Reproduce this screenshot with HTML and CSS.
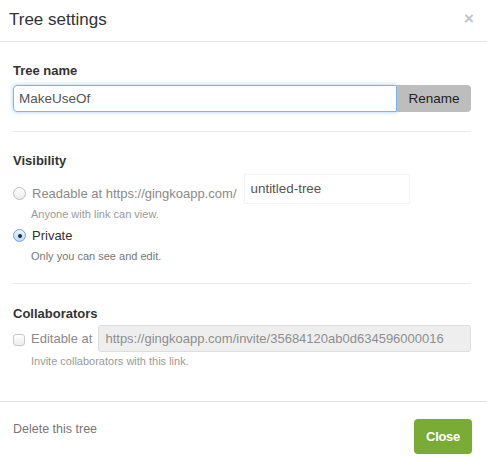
FILE: index.html
```html
<!DOCTYPE html>
<html>
<head>
<meta charset="utf-8">
<link rel="stylesheet" href="styles.css">
</head>
<body>
<div class="modal">
  <div class="modal-header">
    <h3 class="title">Tree settings</h3>
    <span class="close-x">&times;</span>
  </div>
  <div class="modal-body">
    <div class="label">Tree name</div>
    <div class="name-row">
      <div class="name-input">MakeUseOf</div>
      <div class="rename-btn">Rename</div>
    </div>
    <div class="divider"></div>

    <div class="label label-vis">Visibility</div>
    <div class="opt-row opt-public">
      <span class="radio"></span>
      <span class="opt-text muted">Readable at https://gingkoapp.com/</span>
      <div class="slug-input">untitled-tree</div>
    </div>
    <div class="help help-1">Anyone with link can view.</div>
    <div class="opt-row opt-private">
      <span class="radio checked"></span>
      <span class="opt-text">Private</span>
    </div>
    <div class="help help-2">Only you can see and edit.</div>
    <div class="divider divider-2"></div>

    <div class="label label-collab">Collaborators</div>
    <div class="opt-row opt-edit">
      <span class="checkbox"></span>
      <span class="opt-text muted">Editable at</span>
      <div class="invite-input">https://gingkoapp.com/invite/35684120ab0d634596000016</div>
    </div>
    <div class="help help-3">Invite collaborators with this link.</div>
  </div>
  <div class="modal-footer">
    <span class="delete">Delete this tree</span>
    <span class="close-btn">Close</span>
  </div>
</div>
</body>
</html>
```

FILE: styles.css
```css
* { box-sizing: border-box; }
html, body { margin: 0; padding: 0; background: #fff; }
body {
  font-family: "Liberation Sans", Arial, sans-serif;
  color: #333;
  width: 487px;
  height: 460px;
  overflow: hidden;
}
.modal { width: 487px; height: 460px; display: flex; flex-direction: column; }

.modal-header {
  height: 42px;
  border-bottom: 1px solid #e5e5e5;
  display: flex;
  align-items: center;
  justify-content: space-between;
  padding: 0 13px 0 9px;
}
.title {
  margin: 0;
  font-size: 17px;
  font-weight: normal;
  color: #333;
  line-height: 20px;
  margin-top: -1px;
}
.close-x {
  font-size: 17px;
  font-weight: bold;
  color: #c4c4c4;
  line-height: 20px;
  margin-top: -4px;
}

.modal-body { padding: 20px 16px 0 13px; flex: 1; }
.label { font-size: 13px; font-weight: bold; line-height: 18px; color: #333; }

.name-row { display: flex; margin-top: 5px; height: 27px; }
.name-input {
  flex: 1;
  border: 1px solid #79b6ec;
  border-radius: 4px 0 0 4px;
  box-shadow: 0 0 4px rgba(82, 168, 236, 0.55);
  font-size: 13.5px;
  color: #555;
  padding: 0 5px;
  line-height: 25px;
}
.rename-btn {
  width: 74px;
  background: #bdbdbd;
  border-radius: 0 4px 4px 0;
  font-size: 13.5px;
  color: #222;
  text-align: center;
  line-height: 27px;
}

.divider { height: 1px; background: #e8e8e8; margin-top: 19px; }
.label-vis { margin-top: 20px; }

.opt-row { display: flex; align-items: center; }
.opt-public { margin-top: 4px; height: 30px; align-items: flex-end; }
.opt-public .radio { margin-bottom: 4px; }
.opt-public .opt-text { line-height: 20px; }
.opt-text { font-size: 13px; color: #333; margin-left: 6px; }
.opt-text.muted { color: #8a8a8a; }

.radio {
  width: 13px; height: 13px;
  border-radius: 50%;
  border: 1px solid #bdbdbd;
  background: linear-gradient(#fff, #ececec);
  display: inline-block;
  flex: none;
  position: relative;
}
.radio.checked {
  border-color: #6ea4d8;
  background: linear-gradient(#eaf4fc, #bcd9f3);
}
.radio.checked::after {
  content: "";
  position: absolute;
  width: 4px; height: 4px;
  border-radius: 50%;
  background: #1d2b3a;
  left: 3.5px; top: 3.5px;
}

.slug-input {
  width: 166px;
  height: 30px;
  margin-left: 7px;
  border: 1px solid #f3f3f3;
  font-size: 13.4px;
  color: #555;
  padding: 0 6px;
  line-height: 28px;
}

.help { font-size: 11px; color: #9a9a9a; line-height: 14px; padding-left: 18px; }
.help-1 { margin-top: 3px; }
.opt-private { margin-top: 4px; height: 20px; }
.opt-private .radio { margin-top: 1px; }
.help-2 { margin-top: 4px; color: #777; }

.divider-2 { margin-top: 20px; }
.label-collab { margin-top: 21px; }

.opt-edit { margin-top: 2px; height: 27px; }
.checkbox {
  width: 12px; height: 12px;
  border: 1px solid #c8c8c8;
  border-radius: 3px;
  background: linear-gradient(#fff, #ededed);
  flex: none;
  margin-top: 3px;
}
.opt-edit .opt-text { margin-left: 6px; }
.invite-input {
  flex: 1;
  height: 27px;
  margin-left: 6px;
  background: #eeeeee;
  border: 1px solid #dddddd;
  border-radius: 3px;
  font-size: 13px;
  color: #8e8e8e;
  padding: 0 6px;
  line-height: 25px;
  white-space: nowrap;
  overflow: hidden;
}
.help-3 { margin-top: 2px; }

.modal-footer {
  height: 59px;
  border-top: 1px solid #e2e2e2;
  display: flex;
  justify-content: space-between;
  align-items: flex-start;
  padding: 17px 15px 0 13px;
}
.delete { font-size: 12.5px; color: #777; line-height: 20px; }
.close-btn {
  width: 58px;
  height: 35px;
  background: #7aac35;
  border-radius: 4px;
  color: #fff;
  font-weight: bold;
  font-size: 13px;
  line-height: 35px;
  text-align: center;
  letter-spacing: -0.3px;
}
```
